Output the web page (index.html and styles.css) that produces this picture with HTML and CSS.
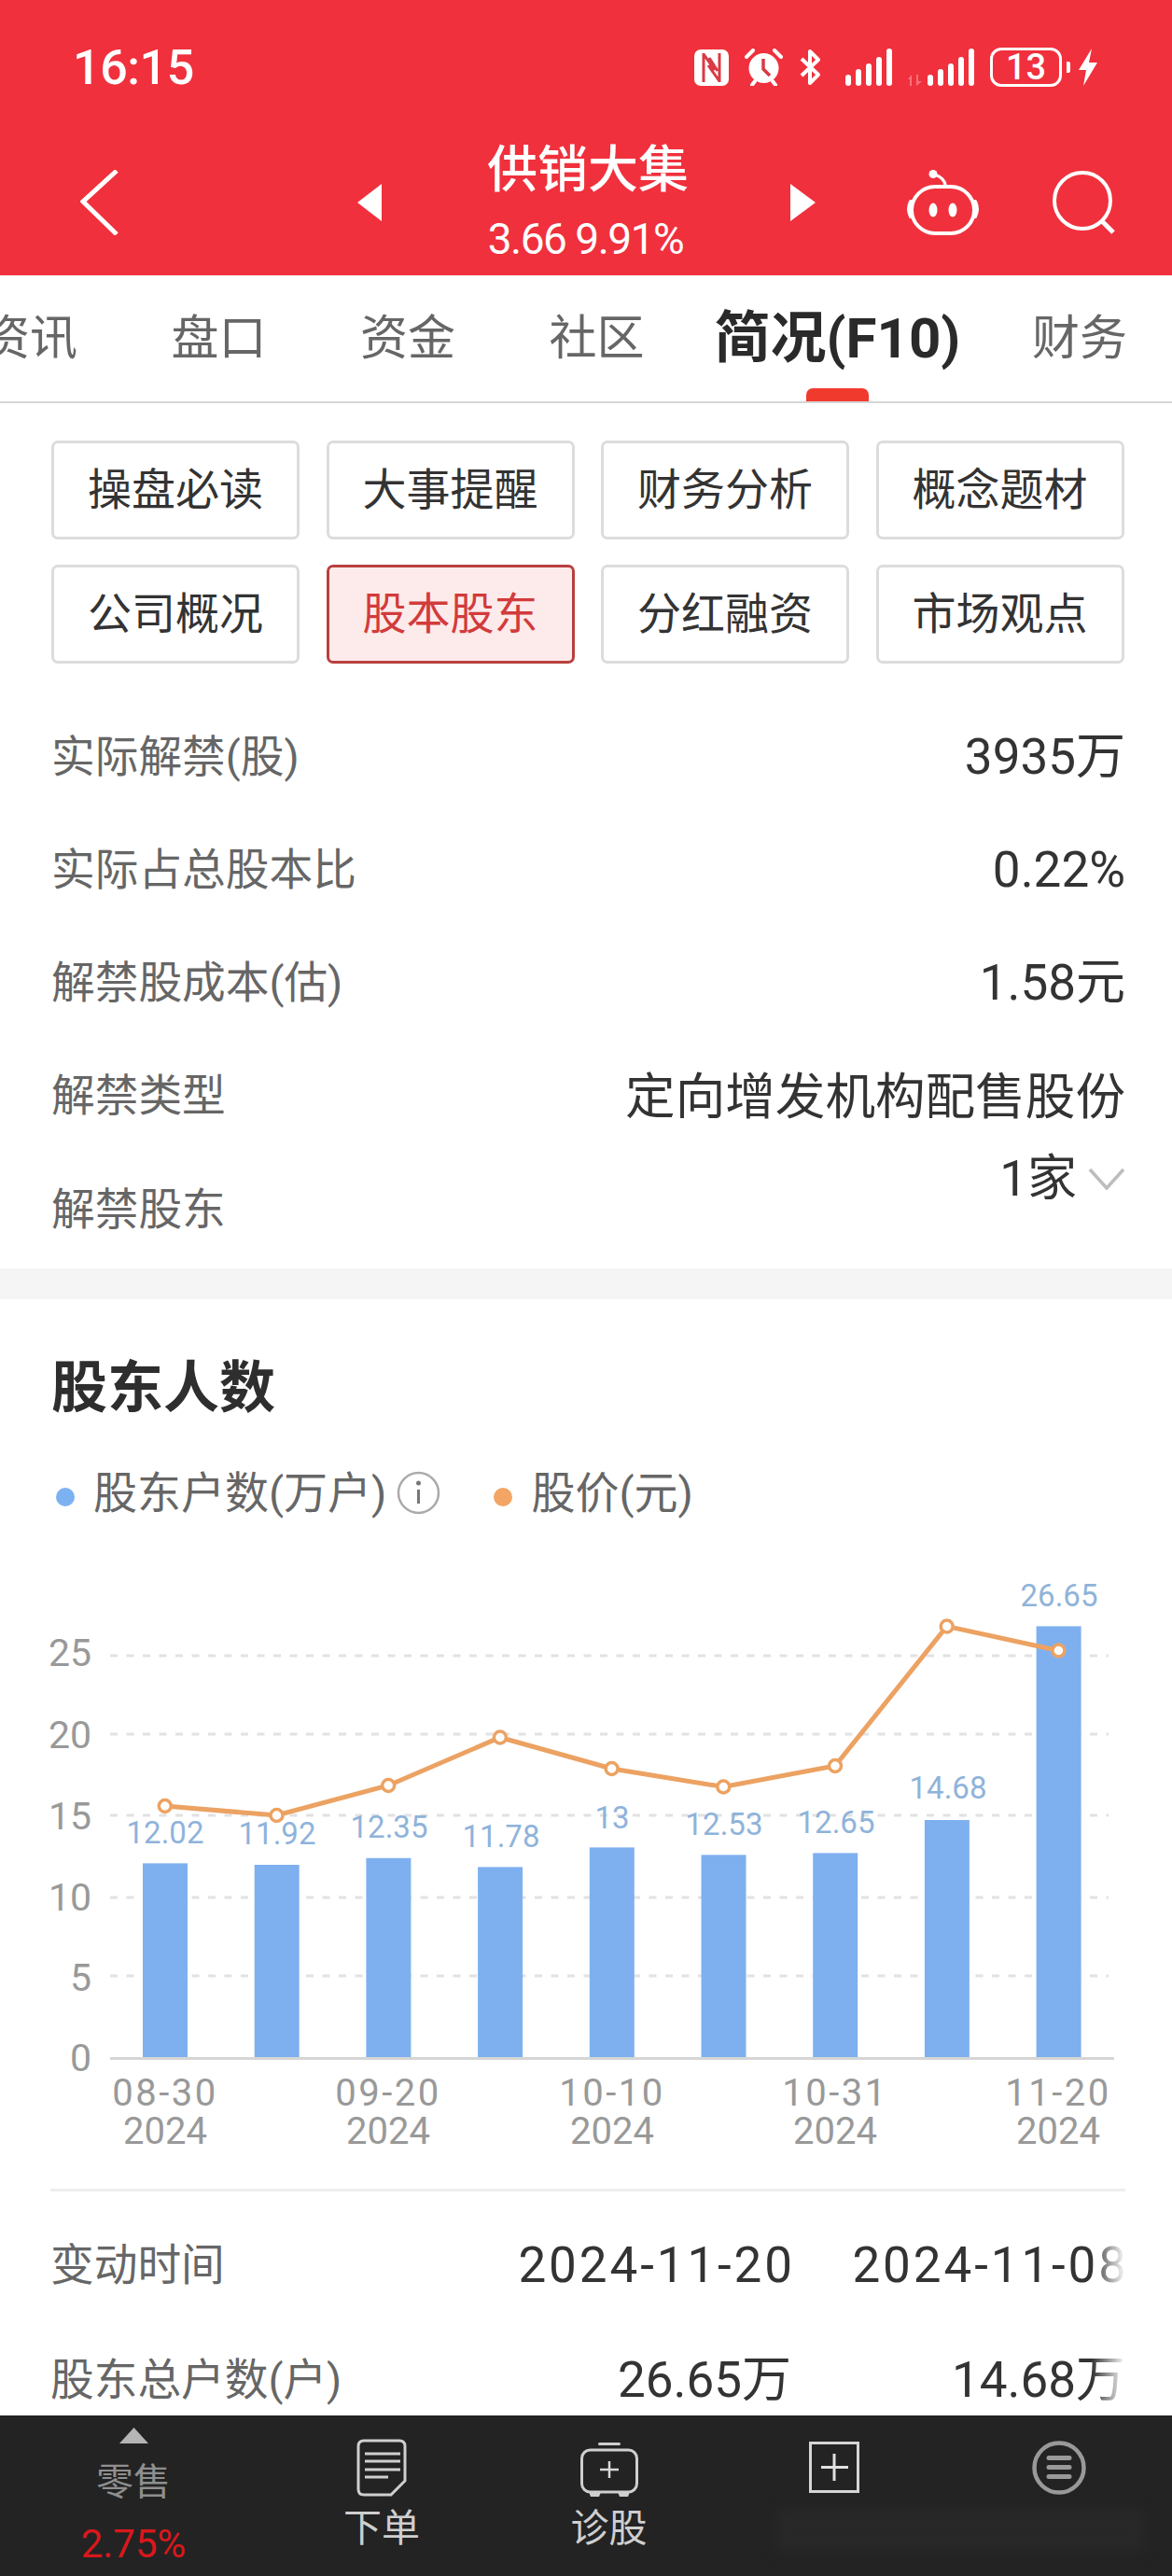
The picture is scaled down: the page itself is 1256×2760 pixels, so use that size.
FILE: index.html
```html
<!DOCTYPE html>
<html lang="zh-CN">
<head>
<meta charset="utf-8">
<title>供销大集</title>
<link rel="stylesheet" href="styles.css">
</head>
<body>
<div class="page">
  <header class="header">
    <div class="status">
      <span class="time">16:15</span>
      <div class="status-icons">
        <svg class="ic-nfc" viewBox="0 0 37 39"><rect width="37" height="39" rx="7" fill="#fff"/><path d="M10 4V35M10 5L22 22M27 4V35M27 34L15 17M16 9L25 23" fill="none" stroke="#d93a44" stroke-width="3"/></svg>
        <svg class="ic-alarm" viewBox="0 0 41 40"><circle cx="20.500" cy="21" r="16" fill="#fff"/><path d="M20 11V22L27 29" fill="none" stroke="#d93a44" stroke-width="3.500"/><path d="M2 9L9 2M39 9L32 2M8 39L11 35M33 39L30 35" fill="none" stroke="#fff" stroke-width="4" stroke-linecap="round"/></svg>
        <svg class="ic-bt" viewBox="0 0 25 40"><path d="M3 11L21 28L12 37V3L21 12L3 29" fill="none" stroke="#fff" stroke-width="4" stroke-linejoin="round"/></svg>
        <svg class="ic-signal" viewBox="0 0 50 40"><g fill="#fff"><rect x="0" y="28" width="6" height="12" rx="3"/><rect x="11" y="22" width="6" height="18" rx="3"/><rect x="22" y="16" width="6" height="24" rx="3"/><rect x="33" y="9" width="6" height="31" rx="3"/><rect x="44" y="0" width="6" height="40" rx="3"/></g></svg>
        <svg class="ic-arrows" viewBox="0 0 17 12"><path d="M1 5L5 0V12H3V5ZM10 0H12V7L16 7L10 12Z" fill="#f7727c"/></svg>
        <svg class="ic-signal ic-signal2" viewBox="0 0 50 40"><g fill="#fff"><rect x="0" y="28" width="6" height="12" rx="3"/><rect x="11" y="22" width="6" height="18" rx="3"/><rect x="22" y="16" width="6" height="24" rx="3"/><rect x="33" y="9" width="6" height="31" rx="3"/><rect x="44" y="0" width="6" height="40" rx="3"/></g></svg>
        <span class="battery">13</span>
        <span class="battery-nub"></span>
        <svg class="ic-bolt" viewBox="0 0 20 40"><path d="M14 0L0 23H8L5 40L20 15H11Z" fill="#fff"/></svg>
      </div>
    </div>
    <div class="nav">
      <svg class="ic-back" viewBox="0 0 41 70"><path d="M39 1L3 34L39 69" fill="none" stroke="#fff" stroke-width="5"/></svg>
      <svg class="ic-tri-left" viewBox="0 0 26 40"><path d="M26 0V40L0 20Z" fill="#fff"/></svg>
      <div class="stock">
        <div class="stock-name">供销大集</div>
        <div class="stock-price">3.66 9.91%</div>
      </div>
      <svg class="ic-tri-right" viewBox="0 0 27 40"><path d="M0 0V40L27 20Z" fill="#fff"/></svg>
      <svg class="ic-robot" viewBox="0 0 79 70"><rect x="6" y="18" width="67" height="50" rx="25" fill="none" stroke="#fff" stroke-width="4"/><path d="M5 34Q1 42 5 50M74 34Q78 42 74 50" fill="none" stroke="#fff" stroke-width="4" stroke-linecap="round"/><path d="M42 17C42 10 36 7 31 5" fill="none" stroke="#fff" stroke-width="3.500"/><circle cx="29" cy="4.500" r="4.500" fill="#fff"/><ellipse cx="29" cy="43" rx="4.500" ry="7.500" fill="#fff"/><ellipse cx="50" cy="43" rx="4.500" ry="7.500" fill="#fff"/></svg>
      <svg class="ic-search" viewBox="0 0 68 68"><circle cx="32" cy="32" r="30" fill="none" stroke="#fff" stroke-width="4"/><path d="M53 54L65 66" stroke="#fff" stroke-width="5"/></svg>
    </div>
  </header>

  <nav class="tabs">
    <span class="tab">资讯</span>
    <span class="tab">盘口</span>
    <span class="tab">资金</span>
    <span class="tab">社区</span>
    <span class="tab tab-active">简况(F10)<i class="tab-bar"></i></span>
    <span class="tab">财务</span>
  </nav>

  <main class="main">
    <section class="panel">
      <div class="chips">
        <span class="chip">操盘必读</span>
        <span class="chip">大事提醒</span>
        <span class="chip">财务分析</span>
        <span class="chip">概念题材</span>
        <span class="chip">公司概况</span>
        <span class="chip chip-active">股本股东</span>
        <span class="chip">分红融资</span>
        <span class="chip">市场观点</span>
      </div>
      <div class="rows">
        <div class="row"><span class="label">实际解禁(股)</span><span class="value">3935万</span></div>
        <div class="row"><span class="label">实际占总股本比</span><span class="value">0.22%</span></div>
        <div class="row"><span class="label">解禁股成本(估)</span><span class="value">1.58元</span></div>
        <div class="row"><span class="label">解禁类型</span><span class="value value-cjk">定向增发机构配售股份</span></div>
        <div class="row row-last"><span class="label">解禁股东</span><span class="value value-more">1家<svg class="ic-chevron" viewBox="0 0 40 24"><path d="M2 2L20 22L38 2" fill="none" stroke="#bdbdbd" stroke-width="3.500"/></svg></span></div>
      </div>
    </section>
    <div class="band"></div>
    <section class="holders">
      <h2 class="title">股东人数</h2>
      <div class="legend">
        <i class="dot dot-blue"></i><span class="legend-text">股东户数(万户)</span>
        <svg class="ic-info" viewBox="0 0 47 47"><circle cx="23.500" cy="23.500" r="21.500" fill="none" stroke="#aaa" stroke-width="2.500"/><circle cx="23.500" cy="13" r="2.500" fill="#777"/><rect x="22" y="20" width="3" height="15" fill="#777"/></svg>
        <i class="dot dot-orange"></i><span class="legend-text">股价(元)</span>
      </div>
      <svg class="chart" viewBox="0 1660 1256 686">
        <g class="grid">
          <line x1="118" x2="1188" y1="1775" y2="1775"/>
          <line x1="118" x2="1188" y1="1859" y2="1859"/>
          <line x1="118" x2="1188" y1="1946" y2="1946"/>
          <line x1="118" x2="1188" y1="2034" y2="2034"/>
          <line x1="118" x2="1188" y1="2118" y2="2118"/>
        </g>
        <g class="bars">
          <rect x="153" y="1997.400" width="48" height="209"/>
          <rect x="272.700" y="1999" width="48" height="207.400"/>
          <rect x="392.400" y="1991.800" width="48" height="214.600"/>
          <rect x="512.100" y="2001.400" width="48" height="205"/>
          <rect x="631.800" y="1980.400" width="48" height="226"/>
          <rect x="751.500" y="1988.400" width="48" height="218"/>
          <rect x="871.200" y="1986.400" width="48" height="220"/>
          <rect x="990.900" y="1951" width="48" height="255.400"/>
          <rect x="1110.600" y="1743.400" width="48" height="463"/>
        </g>
        <line class="axis" x1="118" x2="1194" y1="2206.500" y2="2206.500"/>
        <polyline class="price-line" points="176.800,1936 296.500,1946 416.200,1914 535.900,1862.500 655.600,1896 775.300,1915.500 895,1893 1014.700,1743.500 1134.400,1769.500"/>
        <g class="price-dots">
          <circle cx="176.800" cy="1936" r="6.500"/>
          <circle cx="296.500" cy="1946" r="6.500"/>
          <circle cx="416.200" cy="1914" r="6.500"/>
          <circle cx="535.900" cy="1862.500" r="6.500"/>
          <circle cx="655.600" cy="1896" r="6.500"/>
          <circle cx="775.300" cy="1915.500" r="6.500"/>
          <circle cx="895" cy="1893" r="6.500"/>
          <circle cx="1014.700" cy="1743.500" r="6.500"/>
          <circle cx="1134.400" cy="1769.500" r="6.500"/>
        </g>
        <g class="bar-labels">
          <text x="177" y="1976">12.02</text>
          <text x="297" y="1977">11.92</text>
          <text x="417" y="1970">12.35</text>
          <text x="537" y="1979.500">11.78</text>
          <text x="656" y="1959.500">13</text>
          <text x="776" y="1966.500">12.53</text>
          <text x="896" y="1965">12.65</text>
          <text x="1016" y="1928">14.68</text>
          <text x="1135" y="1721.500">26.65</text>
        </g>
        <g class="y-labels">
          <text x="98" y="1786">25</text>
          <text x="98" y="1873.500">20</text>
          <text x="98" y="1960.500">15</text>
          <text x="98" y="2047.500">10</text>
          <text x="98" y="2133.500">5</text>
          <text x="98" y="2219.500">0</text>
        </g>
        <g class="x-labels">
          <text><tspan x="177" y="2257">08-30</tspan><tspan class="x-year" x="177" y="2298">2024</tspan></text>
          <text><tspan x="416" y="2257">09-20</tspan><tspan class="x-year" x="416" y="2298">2024</tspan></text>
          <text><tspan x="656" y="2257">10-10</tspan><tspan class="x-year" x="656" y="2298">2024</tspan></text>
          <text><tspan x="895" y="2257">10-31</tspan><tspan class="x-year" x="895" y="2298">2024</tspan></text>
          <text><tspan x="1134" y="2257">11-20</tspan><tspan class="x-year" x="1134" y="2298">2024</tspan></text>
        </g>
      </svg>
      <div class="divider"></div>
      <div class="table">
        <span class="label">变动时间</span><span class="cell cell-date">2024-11-20</span><span class="cell cell-date">2024-11-08</span>
        <span class="label">股东总户数(户)</span><span class="cell">26.65万</span><span class="cell">14.68万</span>
        <i class="fade"></i>
      </div>
    </section>
  </main>

  <footer class="bottom">
    <div class="bottom-item bottom-quote">
      <svg class="ic-up" viewBox="0 0 31 17"><path d="M15.500 0L31 17H0Z" fill="#b5b5b5"/></svg>
      <span class="quote-name">零售</span>
      <span class="quote-pct">2.75%</span>
    </div>
    <div class="bottom-item">
      <svg class="ic-doc" viewBox="0 0 54 62"><path d="M8 2H46Q52 2 52 8V45L37 60H8Q2 60 2 54V8Q2 2 8 2Z" fill="none" stroke="#cfcfcf" stroke-width="3"/><path d="M9 16H47M9 24H47M9 33H47M9 41H34" stroke="#cfcfcf" stroke-width="3"/></svg>
      <span class="bottom-label">下单</span>
    </div>
    <div class="bottom-item">
      <svg class="ic-kit" viewBox="0 0 62 58"><rect x="19" y="0" width="24" height="3" rx="1.500" fill="#cfcfcf"/><rect x="1.500" y="8" width="59" height="45" rx="9" fill="none" stroke="#cfcfcf" stroke-width="3"/><path d="M9 53H22L20 58H11ZM40 53H53L51 58H42Z" fill="#cfcfcf"/><path d="M31 20V38M21 29H41" stroke="#d8d8d8" stroke-width="2.500"/></svg>
      <span class="bottom-label">诊股</span>
    </div>
    <div class="bottom-item">
      <svg class="ic-plus" viewBox="0 0 54 55"><rect x="1.500" y="1.500" width="51" height="52" fill="none" stroke="#d5d5d5" stroke-width="3"/><path d="M27 13V42M13 27.500H42" stroke="#e0e0e0" stroke-width="3"/></svg>
    </div>
    <div class="bottom-item">
      <svg class="ic-menu" viewBox="0 0 58 58"><circle cx="29" cy="29" r="26.500" fill="none" stroke="#999" stroke-width="4.500"/><path d="M18 18.500H40M18 28.500H40M18 38.500H40" stroke="#999" stroke-width="5" stroke-linecap="round"/></svg>
    </div>
    <i class="smudge"></i>
  </footer>
</div>
</body>
</html>
```
FILE: styles.css
```css
* { box-sizing: border-box; }
html, body { margin: 0; padding: 0; background: #fff; }
body { font-family: Roboto, "Noto Sans CJK SC", sans-serif; }
.page { width: 1256px; height: 2760px; display: flex; flex-direction: column; overflow: hidden; }

/* Header */
.header { height: 295px; flex: none; background: #f0303c; color: #fff; padding-top: 51px; }
.status { height: 42px; display: flex; align-items: center; padding: 0 80px 0 78px; }
.time { font-size: 52px; font-weight: 500; line-height: 44px; letter-spacing: -.4px; margin-top: 2px; }
.status-icons { margin-left: auto; display: flex; align-items: center; }
.status-icons svg { display: block; flex: none; }
.ic-nfc { width: 37px; height: 39px; }
.ic-alarm { width: 41px; height: 40px; margin-left: 17px; }
.ic-bt { width: 25px; height: 40px; margin-left: 17px; }
.ic-signal { width: 50px; height: 40px; margin-left: 25px; }
.ic-arrows { width: 17px; height: 12px; margin: 28px 0 0 16px; }
.status-icons .ic-signal2 { margin-left: 5px; }
.battery { width: 77px; height: 42px; margin-left: 17px; border: 3px solid #fff; border-radius: 12px; display: flex; align-items: center; justify-content: center; font-size: 38px; font-weight: 500; line-height: 1; }
.battery-nub { width: 4px; height: 12px; margin-left: 5px; background: #fff; border-radius: 0 2px 2px 0; }
.ic-bolt { width: 20px; height: 40px; margin-left: 9px; }

.nav { margin-top: 67px; height: 113px; padding-left: 86px; display: flex; align-items: center; }
.nav svg { display: block; flex: none; }
.ic-back { width: 41px; height: 70px; }
.ic-tri-left { width: 26px; height: 40px; margin-left: 256px; }
.stock { width: 211px; margin-left: 113px; text-align: center; white-space: nowrap; }
.stock-name { font-size: 54px; font-weight: 500; line-height: 60px; }
.stock-price { font-size: 46px; letter-spacing: -1.500px; line-height: 50px; margin-top: 18px; }
.ic-tri-right { width: 27px; height: 40px; margin-left: 114px; }
.ic-robot { width: 79px; height: 70px; margin-left: 97px; }
.ic-search { width: 68px; height: 68px; margin-left: 78px; }

/* Tabs */
.tabs { height: 137px; flex: none; display: flex; align-items: stretch; border-bottom: 2px solid #d6d6d6; overflow: hidden; }
.tab { position: relative; display: flex; align-items: center; flex: none; margin-left: 100.500px; font-size: 51px; line-height: 60px; color: #666; white-space: nowrap; }
.tab:first-child { margin-left: -19px; }
.tab-active { margin-left: 75px; margin-right: -24px; font-size: 60px; font-weight: 700; color: #2a2a2a; }
.tab-bar { position: absolute; left: 98px; bottom: 0; width: 67px; height: 14px; background: #f03a2e; border-radius: 7px 7px 0 0; }

/* Main */
.main { flex: 1; min-height: 0; overflow: hidden; }
.panel { padding: 40px 50px 0 55px; }
.chips { display: grid; grid-template-columns: repeat(4, 266px); column-gap: 28.500px; row-gap: 27px; }
.chip { height: 106px; padding-bottom: 2px; display: flex; align-items: center; justify-content: center; border: 3px solid #dcdcdc; border-radius: 7px; font-size: 47px; color: #333; line-height: 1; }
.chip-active { background: #fdeaea; border-color: #b8403f; color: #d23b3b; }

.rows { margin-top: 39px; }
.row { height: 121px; display: flex; align-items: center; justify-content: space-between; }
.label { font-size: 46.700px; line-height: 52px; color: #666; white-space: nowrap; }
.value { font-size: 53px; line-height: 60px; color: #333; white-space: nowrap; }
.value-cjk { margin-top: 5px; font-size: 53.600px; }
.row-last { height: 125px; align-items: flex-start; }
.row-last .label { margin-top: 36px; }
.value-more { display: flex; align-items: center; line-height: 52px; margin-top: 3px; }
.ic-chevron { display: block; width: 40px; height: 24px; margin-left: 12px; }

.band { height: 33px; background: #f5f5f5; }

/* Holders */
.holders { padding: 61px 0 0; }
.title { margin: 0 0 0 55px; font-size: 60px; line-height: 70px; font-weight: 700; color: #2e2e2e; }
.legend { margin: 54px 0 0 60px; height: 46px; display: flex; align-items: center; }
.dot { width: 20px; height: 20px; margin-top: 8px; border-radius: 50%; flex: none; }
.dot-blue { background: #7db2f2; }
.dot-orange { background: #f3a565; margin-left: 57px; }
.legend-text { margin-left: 20px; font-size: 47px; line-height: 46px; color: #666; white-space: nowrap; }
.ic-info { display: block; width: 47px; height: 47px; margin: -2px 0 0 11px; flex: none; }

.chart { display: block; width: 1256px; height: 686px; margin-top: 36px; }
.grid line { stroke: #e2e2e2; stroke-width: 3; stroke-dasharray: 8 9.500; }
.bars rect { fill: #7eb0f0; }
.axis { stroke: #d6d6d6; stroke-width: 3; }
.price-line { fill: none; stroke: #eca262; stroke-width: 5; }
.price-dots circle { fill: #fff; stroke: #eca262; stroke-width: 3.500; }
.bar-labels text { font-size: 33px; fill: #8fb3da; text-anchor: middle; }
.y-labels text { font-size: 41px; fill: #999; text-anchor: end; }
.x-labels text { font-size: 40px; fill: #999; text-anchor: middle; letter-spacing: 2.500px; }
.x-labels .x-year { letter-spacing: 0; }

.divider { height: 3px; margin: 0 50px 0 54px; background: #eee; }
.table { position: relative; margin: 17px 50px 0 54px; display: grid; grid-template-columns: 1fr 300px 358px; grid-auto-rows: 123px; align-items: center; }
.cell { text-align: right; font-size: 53px; line-height: 60px; color: #333; white-space: nowrap; }
.cell-date { letter-spacing: 2.900px; margin-right: -4px; }
.fade { position: absolute; top: 0; right: 0; bottom: 0; width: 36px; background: linear-gradient(to right, rgba(255,255,255,0), #fff); }

/* Bottom */
.bottom { position: relative; height: 172px; flex: none; background: #232323; display: grid; grid-template-columns: 286px 246px 241px 241px 242px; }
.bottom-item { display: flex; flex-direction: column; align-items: center; padding-top: 27px; }
.bottom-item svg { display: block; flex: none; }
.bottom-quote { padding-top: 13px; }
.ic-up { width: 31px; height: 17px; }
.quote-name { margin-top: 18px; font-size: 40px; line-height: 48px; color: #8f8f8f; }
.quote-pct { margin-top: 18px; font-size: 42px; line-height: 48px; color: #d8181c; }
.ic-doc { width: 54px; height: 62px; margin-top: -2px; }
.ic-kit { width: 62px; height: 58px; margin-top: 2px; }
.ic-plus { width: 54px; height: 55px; margin-top: 1px; }
.ic-menu { width: 58px; height: 58px; }
.bottom-label { margin-top: 10px; font-size: 41px; line-height: 48px; color: #cfcfcf; }
.smudge { position: absolute; left: 832px; top: 100px; width: 395px; height: 46px; background: #2a2a2a; filter: blur(7px); opacity: .7; }
```
